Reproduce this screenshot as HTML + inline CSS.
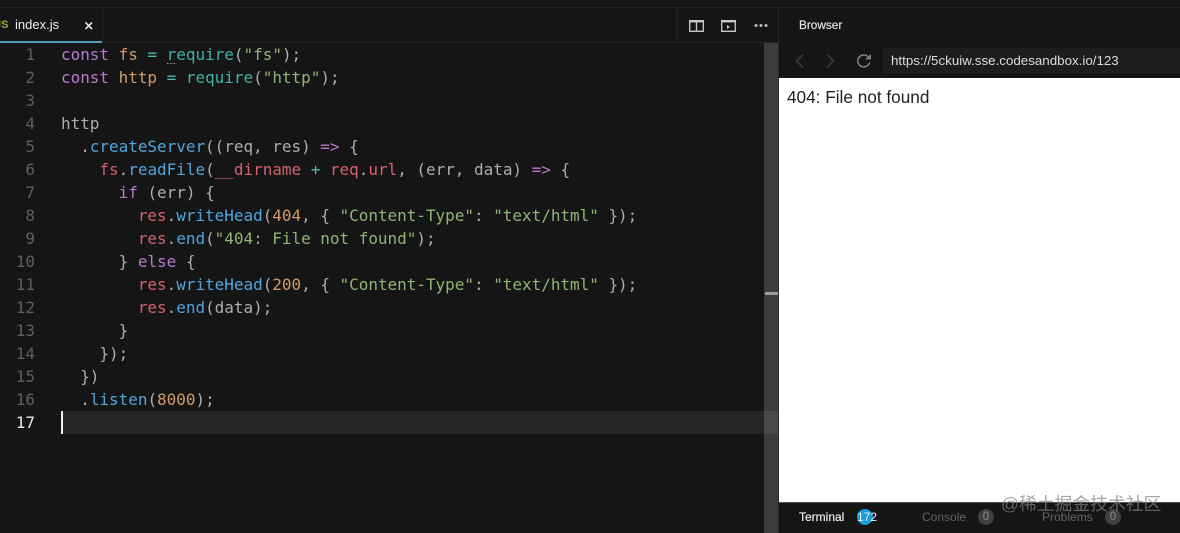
<!DOCTYPE html>
<html>
<head>
<meta charset="utf-8">
<style>
html,body{margin:0;padding:0;background:#151515;}
#r{position:relative;width:1180px;height:533px;overflow:hidden;background:#151515;font-family:"Liberation Sans",sans-serif;filter:blur(.35px);}
.a{position:absolute;}
pre{margin:0;position:absolute;left:61px;top:43px;font:16px/23px "DejaVu Sans Mono","Liberation Mono",monospace;color:#adadad;letter-spacing:-0.03px;}
.n{position:absolute;left:0;width:35px;text-align:right;font:16px/23px "DejaVu Sans Mono","Liberation Mono",monospace;color:#5f5f5f;}
.k{color:#b879cc}.v{color:#cf9a68}.o{color:#4fb8b0}.f{color:#52a5dc}.s{color:#8fb573}.r{color:#d4606d}.c{color:#3fb0a9}
</style>
</head>
<body>
<div id="r">
<div class="a" style="left:0;top:7px;width:1180px;height:1px;background:#232323"></div>
<div class="a" style="left:0;top:42px;width:778px;height:1px;background:#232323"></div>
<div class="a" style="left:102px;top:8px;width:1px;height:34px;background:#232323"></div>
<div class="a" style="left:677px;top:8px;width:1px;height:34px;background:#232323"></div>
<div class="a" style="left:0;top:41px;width:102px;height:2px;background:#4f9fbd"></div>
<div class="a" style="left:-5px;top:17px;font:bold 11px/16px 'Liberation Sans',sans-serif;color:#a8a34a;width:13px;text-align:right;">JS</div>
<div class="a" style="left:15px;top:16px;font:13px/17px 'Liberation Sans',sans-serif;color:#f0f0f0;">index.js</div>
<svg class="a" style="left:84px;top:21px" width="10" height="10" viewBox="0 0 10 10"><path d="M1.5 1.5L8 8M8 1.5L1.5 8" stroke="#e4e4e4" stroke-width="1.6" fill="none"/></svg>

<svg class="a" style="left:689px;top:20px" width="15" height="12" viewBox="0 0 15 12"><path d="M.7.7H14.3V11.3H.7ZM7.5.7V11.3" stroke="#c9c9c9" stroke-width="1.3" fill="none"/><rect x="0" y="0" width="15" height="2.4" fill="#c9c9c9"/></svg>
<svg class="a" style="left:721px;top:20px" width="15" height="12" viewBox="0 0 15 12"><path d="M.7.7H14.3V11.3H.7Z" stroke="#c9c9c9" stroke-width="1.3" fill="none"/><rect x="0" y="0" width="15" height="2.4" fill="#c9c9c9"/><path d="M6 5L9 7L6 9Z" fill="#c9c9c9"/></svg>
<svg class="a" style="left:754px;top:23px" width="14" height="5" viewBox="0 0 14 5"><circle cx="2" cy="2.5" r="1.5" fill="#bdbdbd"/><circle cx="7" cy="2.5" r="1.5" fill="#bdbdbd"/><circle cx="12" cy="2.5" r="1.5" fill="#bdbdbd"/></svg>

<div class="n" style="top:43px">1</div>
<div class="n" style="top:66px">2</div>
<div class="n" style="top:89px">3</div>
<div class="n" style="top:112px">4</div>
<div class="n" style="top:135px">5</div>
<div class="n" style="top:158px">6</div>
<div class="n" style="top:181px">7</div>
<div class="n" style="top:204px">8</div>
<div class="n" style="top:227px">9</div>
<div class="n" style="top:250px">10</div>
<div class="n" style="top:273px">11</div>
<div class="n" style="top:296px">12</div>
<div class="n" style="top:319px">13</div>
<div class="n" style="top:342px">14</div>
<div class="n" style="top:365px">15</div>
<div class="n" style="top:388px">16</div>
<div class="n" style="top:411px;color:#e8e8e8">17</div>

<div class="a" style="left:61px;top:411px;width:704px;height:23px;background:#262626"></div>
<div class="a" style="left:61px;top:411px;width:2px;height:23px;background:#f2f2f2"></div>
<div class="a" style="left:167px;top:63px;width:10px;height:2px;background-image:linear-gradient(90deg,#aaa 50%,transparent 50%);background-size:3.3px 1px;background-repeat:repeat-x"></div>

<pre><span class="k">const</span> <span class="v">fs</span> <span class="o">=</span> <span class="c">require</span>(<span class="s">"fs"</span>);
<span class="k">const</span> <span class="v">http</span> <span class="o">=</span> <span class="c">require</span>(<span class="s">"http"</span>);

http
  .<span class="f">createServer</span>((req, res) <span class="k">=&gt;</span> {
    <span class="r">fs</span>.<span class="f">readFile</span>(<span class="r">__dirname</span> <span class="o">+</span> <span class="r">req</span>.<span class="r">url</span>, (err, data) <span class="k">=&gt;</span> {
      <span class="k">if</span> (err) {
        <span class="r">res</span>.<span class="f">writeHead</span>(<span class="v">404</span>, { <span class="s">"Content-Type"</span>: <span class="s">"text/html"</span> });
        <span class="r">res</span>.<span class="f">end</span>(<span class="s">"404: File not found"</span>);
      } <span class="k">else</span> {
        <span class="r">res</span>.<span class="f">writeHead</span>(<span class="v">200</span>, { <span class="s">"Content-Type"</span>: <span class="s">"text/html"</span> });
        <span class="r">res</span>.<span class="f">end</span>(data);
      }
    });
  })
  .<span class="f">listen</span>(<span class="v">8000</span>);
</pre>

<div class="a" style="left:764px;top:43px;width:14px;height:490px;background:#3c3c3c"></div>
<div class="a" style="left:764px;top:411px;width:14px;height:23px;background:#484848"></div>
<div class="a" style="left:765px;top:292px;width:13px;height:3px;background:#9a9a9a"></div>
<div class="a" style="left:778px;top:8px;width:1px;height:525px;background:#2a2a2a"></div>

<div class="a" style="left:799px;top:17px;font:11.8px/16px 'Liberation Sans',sans-serif;color:#e0e0e0;-webkit-text-stroke:.2px #e0e0e0;">Browser</div>

<svg class="a" style="left:793px;top:53px" width="14" height="16" viewBox="0 0 14 16"><path d="M10 1.5L3.5 8L10 14.5" stroke="#3f3f3f" stroke-width="1.5" fill="none"/></svg>
<svg class="a" style="left:823px;top:53px" width="14" height="16" viewBox="0 0 14 16"><path d="M4 1.5L10.5 8L4 14.5" stroke="#3f3f3f" stroke-width="1.5" fill="none"/></svg>
<svg class="a" style="left:856px;top:53px" width="16" height="16" viewBox="0 0 16 16"><path d="M13.6 9.5A6 6 0 1 1 11.5 3.2L14 5.2" stroke="#8f8f8f" stroke-width="1.4" fill="none"/><path d="M14.2 1.5V5.6H10" stroke="#8f8f8f" stroke-width="1.4" fill="none"/></svg>

<div class="a" style="left:883px;top:48px;width:297px;height:26px;background:#1d1d1d;border-radius:3px 0 0 3px"></div>
<div class="a" style="left:891px;top:52px;font:13.35px/17px 'Liberation Sans',sans-serif;color:#dcdcdc;white-space:nowrap;">https://5ckuiw.sse.codesandbox.io/123</div>

<div class="a" style="left:779px;top:78px;width:401px;height:424px;background:#fff"></div>
<div class="a" style="left:787px;top:88px;font:17.2px/19px 'Liberation Sans',sans-serif;color:#222;white-space:nowrap;">404: File not found</div>

<div class="a" style="left:779px;top:502px;width:401px;height:1px;background:#555"></div>
<div class="a" style="left:799px;top:509px;font:12px/16px 'Liberation Sans',sans-serif;color:#eaeaea;-webkit-text-stroke:.2px #eaeaea;">Terminal</div>
<div class="a" style="left:857px;top:509px;width:16px;height:16px;border-radius:50%;background:#1d9bdc"></div>
<div class="a" style="left:857px;top:509px;font:12px/16px 'Liberation Sans',sans-serif;color:#e8f4fb;">172</div>
<div class="a" style="left:922px;top:509px;font:12px/16px 'Liberation Sans',sans-serif;color:#646464;">Console</div>
<div class="a" style="left:978px;top:509px;width:16px;height:16px;border-radius:50%;background:#404040;color:#8e8e8e;font:11.5px/16px 'Liberation Sans',sans-serif;text-align:center">0</div>
<div class="a" style="left:1042px;top:509px;font:12px/16px 'Liberation Sans',sans-serif;color:#646464;">Problems</div>
<div class="a" style="left:1105px;top:509px;width:16px;height:16px;border-radius:50%;background:#404040;color:#8e8e8e;font:11.5px/16px 'Liberation Sans',sans-serif;text-align:center">0</div>
<div class="a" style="left:1001px;top:494px;font:17.8px/20px 'Liberation Sans','Noto Sans CJK SC',sans-serif;color:rgba(130,130,130,.7);white-space:nowrap;">@稀土掘金技术社区</div>
</div>
</body>
</html>
